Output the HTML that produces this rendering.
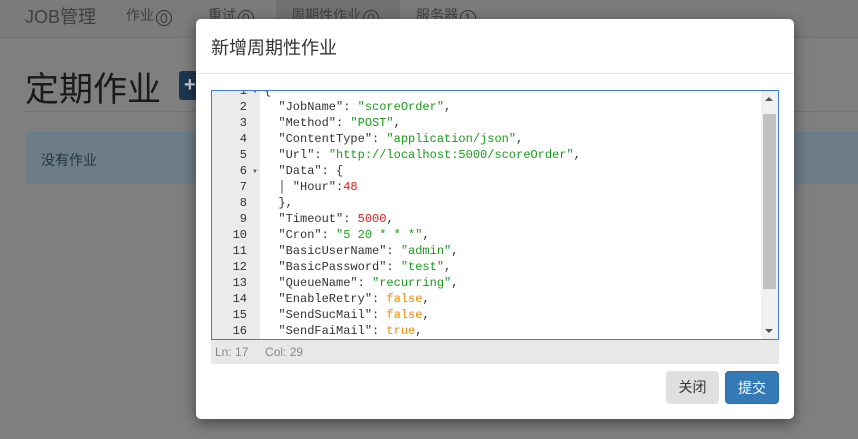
<!DOCTYPE html>
<html><head><meta charset="utf-8"><style>
*{box-sizing:border-box;margin:0;padding:0}
body{width:858px;height:439px;overflow:hidden;background:#7f7f7f;font-family:"Liberation Sans","Noto Sans CJK SC",sans-serif;position:relative}
.nav{position:absolute;left:0;top:0;width:858px;height:38px;background:#7b7b7b;border-bottom:1px solid #727272}
.nav span{position:absolute;top:5px;font-size:14px;color:#3f3f3f}
.badge{display:inline-block;border:1px solid #333;border-radius:9px;font-size:12px;padding:0 3px;line-height:14px;margin-left:2px}
.act{position:absolute;left:276px;top:0;width:124px;height:38px;background:#717171}
h1{position:absolute;left:25px;top:62px;font-size:34px;font-weight:normal;color:#1a1a1a}
.plus{position:absolute;left:179px;top:71px;width:24px;height:29px;background:#1a3650;border-radius:3px;color:#ccc;font-size:20px;font-weight:bold;line-height:29px;padding-left:5px}
.hr{position:absolute;left:25px;top:111px;width:840px;height:1px;background:#727272}
.alert{position:absolute;left:25px;top:132px;width:850px;height:52px;background:#6e7c86;border:1px solid #65808a;border-radius:4px;color:#1f3646;font-size:14px;padding:17px 15px}
.modal{position:absolute;left:196px;top:19px;width:598px;height:400px;background:#fff;border-radius:5px;box-shadow:0 4px 14px rgba(0,0,0,.45)}
.mh{height:55px;border-bottom:1px solid #e5e5e5;font-size:18px;color:#333;padding:15px 15px}
.ed{position:absolute;left:15px;top:71px;width:568px;height:250px;border:1px solid #3b7ee0;overflow:hidden;background:#fff}
.gut{position:absolute;left:0;top:0;width:48px;height:250px;background:#ebebeb}
.code{position:absolute;left:0;top:-8px;font-family:"Liberation Mono",monospace;font-size:12px;line-height:16px;white-space:pre;color:#333}
.ln{display:inline-block;width:35px;text-align:right;margin-right:17px;color:#333}
.s{color:#1a9a1a}.n{color:#e31e1e}.b{color:#f28a00}
.sb{position:absolute;right:0;top:0;width:17px;height:250px;background:#f1f1f1}
.th{position:absolute;left:2px;top:23px;width:13px;height:175px;background:#c1c1c1}
.st{position:absolute;left:15px;top:321px;width:568px;height:24px;background:#e8e8e8;font-size:12px;color:#888;padding:5px 4px}
.btn{position:absolute;top:352px;height:33px;border-radius:4px;font-size:14px;text-align:center;line-height:33px}
</style></head><body>
<div class="nav">
<div class="act"></div>
<span style="left:25px;font-size:18px;top:3px">JOB管理</span>
<span style="left:126px">作业<span class="badge">0</span></span>
<span style="left:208px">重试<span class="badge">0</span></span>
<span style="left:291px">周期性作业<span class="badge">0</span></span>
<span style="left:416px">服务器<span class="badge">1</span></span>
</div>
<h1>定期作业</h1><div class="plus">+</div><div class="hr"></div>
<div class="alert">没有作业</div>
<div class="modal">
<div class="mh">新增周期性作业</div>
<div class="ed"><div class="gut"></div>
<div class="code"><span class="ln">1</span>{
<span class="ln">2</span>  "JobName": <span class="s">"scoreOrder"</span>,
<span class="ln">3</span>  "Method": <span class="s">"POST"</span>,
<span class="ln">4</span>  "ContentType": <span class="s">"application/json"</span>,
<span class="ln">5</span>  "Url": <span class="s">"http://localhost:5000/scoreOrder"</span>,
<span class="ln">6</span>  "Data": {
<span class="ln">7</span>  │ "Hour":<span class="n">48</span>
<span class="ln">8</span>  },
<span class="ln">9</span>  "Timeout": <span class="n">5000</span>,
<span class="ln">10</span>  "Cron": <span class="s">"5 20 * * *"</span>,
<span class="ln">11</span>  "BasicUserName": <span class="s">"admin"</span>,
<span class="ln">12</span>  "BasicPassword": <span class="s">"test"</span>,
<span class="ln">13</span>  "QueueName": <span class="s">"recurring"</span>,
<span class="ln">14</span>  "EnableRetry": <span class="b">false</span>,
<span class="ln">15</span>  "SendSucMail": <span class="b">false</span>,
<span class="ln">16</span>  "SendFaiMail": <span class="b">true</span>,
<span class="ln">17</span>  "x": 1</div>
<div style="position:absolute;left:40px;top:-2px;font-size:6px;color:#555">▼</div>
<div style="position:absolute;left:40px;top:78px;font-size:6px;color:#555">▼</div>
<div class="sb"><div class="th"></div>
<div style="position:absolute;left:4px;top:6px;width:0;height:0;border:4px solid transparent;border-bottom:4px solid #555;border-top:0"></div>
<div style="position:absolute;left:4px;top:238px;width:0;height:0;border:4px solid transparent;border-top:4px solid #555;border-bottom:0"></div>
</div></div>
<div class="st">Ln: 17 &nbsp;&nbsp;&nbsp; Col: 29</div>
<div class="btn" style="left:470px;width:53px;background:#e0e0e0;color:#333">关闭</div>
<div class="btn" style="left:529px;width:54px;background:#337ab7;color:#fff;border:1px solid #2e6da4">提交</div>
</div>
</body></html>
